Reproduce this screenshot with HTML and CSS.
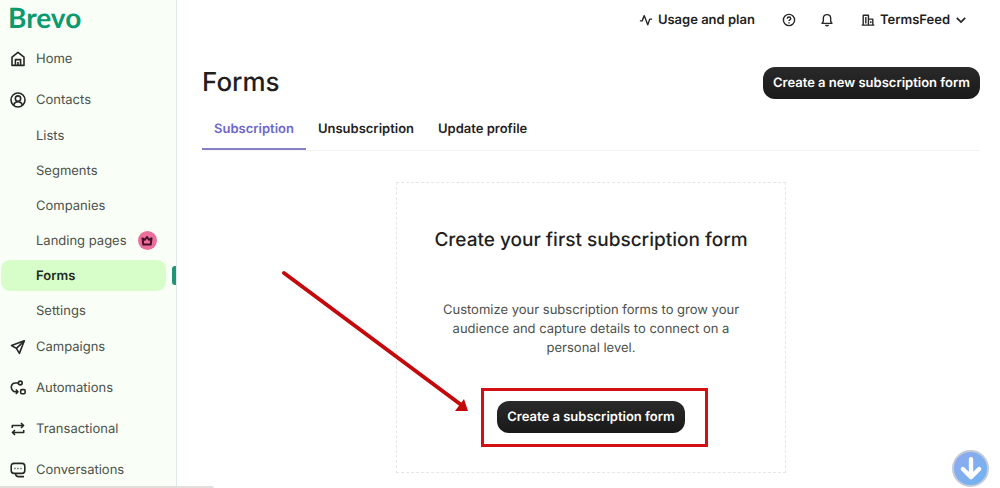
FILE: index.html
```
<!DOCTYPE html>
<html lang="en">
<head>
  <title>Forms - Brevo</title>
  <meta charset="UTF-8">
  <meta name="viewport" content="width=device-width, initial-scale=1">
  <link rel="stylesheet" href="styles.css">
</head>
<body>
  <div class="app">
    <aside class="sidebar">
      <a href="#" class="logo">Brevo</a>
      <nav>
        <a href="#" class="nav-item">
          <svg class="icon" viewBox="0 0 16 16"><path d="M2 6.200 8 1.400l6 4.800v8.200H2z"/><path d="M5.400 14.200V8.600h5.200v5.600M8 11v3"/></svg>
          Home
        </a>
        <a href="#" class="nav-item">
          <svg class="icon" viewBox="0 0 16 16"><circle cx="8" cy="8" r="7"/><circle cx="8" cy="6.600" r="2.700"/><path d="M3.600 13c.6-2.200 2.300-3.200 4.400-3.200s3.800 1 4.400 3.200"/></svg>
          Contacts
        </a>
        <div class="subnav">
          <a href="#">Lists</a>
          <a href="#">Segments</a>
          <a href="#">Companies</a>
          <a href="#">Landing pages
            <span class="premium">
              <svg viewBox="0 0 12 12"><path d="M1.500 3.400 3.800 4.800 6 2l2.200 2.800 2.300-1.400-.8 6.200H2.300z"/></svg>
            </span>
          </a>
          <a href="#" class="active">Forms</a>
          <a href="#">Settings</a>
        </div>
        <a href="#" class="nav-item">
          <svg class="icon" viewBox="0 0 16 16"><path d="M14.300 1.800 1.500 6.500l4.900 2.900 3 5z"/><path d="M14.300 1.800 6.400 9.400"/></svg>
          Campaigns
        </a>
        <a href="#" class="nav-item">
          <svg class="icon" viewBox="0 0 16 16"><circle cx="10.300" cy="3" r="1.900"/><rect x="10.700" y="9.600" width="4.400" height="4.200" rx="1"/><path d="M8.200 3H5.500C3 3 1.300 4.600 1.300 6.900S3 11.700 5.300 11.700h2.500M5.800 9.500 8 11.700l-2.200 2.200"/></svg>
          Automations
        </a>
        <a href="#" class="nav-item">
          <svg class="icon" viewBox="0 0 16 16"><path d="M2.300 7V4.500h11M11 2l2.600 2.500L11 7M13.700 9v2.500h-11M5 9l-2.600 2.500L5 14"/></svg>
          Transactional
        </a>
        <a href="#" class="nav-item">
          <svg class="icon" viewBox="0 0 16 16"><path d="M14 14.600H8.500c-1.800 0-2.800-.8-3.200-3.200M12 11.400H4c-1.800 0-2.800-1-2.800-2.800V4.200C1.200 2.400 2.200 1.400 4 1.400h8c1.800 0 2.800 1 2.800 2.800v4.400c0 1.800-1 2.800-2.800 2.800z"/><path d="M4.500 6.500h1M7.500 6.500h1M10.500 6.500h1"/></svg>
          Conversations
        </a>
      </nav>
    </aside>

    <main>
      <header class="topbar">
        <a href="#" class="usage">
          <svg class="icon" viewBox="0 0 16 16"><path d="M1 9h2.600L6 3l4 10.500L12.300 7H15"/></svg>
          Usage and plan
        </a>
        <button type="button" class="plain" aria-label="Help">
          <svg class="icon" viewBox="0 0 16 16"><circle cx="8" cy="8" r="6.400"/><path d="M6 6.600c0-1.200.8-2 2-2s2 .8 2 1.900c0 1.400-2 1.400-2 2.700M8 10.700v1.200"/></svg>
        </button>
        <button type="button" class="plain" aria-label="Notifications">
          <svg class="icon" viewBox="0 0 16 16"><path d="M2.300 11.800h11.400L12.200 9.500V6c0-2.500-1.700-4.200-4.200-4.200S3.800 3.500 3.800 6v3.500z"/><path d="M6.300 13.500c.3.800.9 1.200 1.700 1.200s1.400-.4 1.700-1.200"/></svg>
        </button>
        <button type="button" class="plain account">
          <svg class="icon" viewBox="0 0 16 16"><path d="M2.500 2.500h6v11.300h-6zM8.500 7h5v6.800h-5M.8 13.800h14.400"/><path d="M5.500 4.500v7.500M11.200 9.500v2"/></svg>
          TermsFeed
          <svg class="chevron" viewBox="0 0 10 10"><path d="M1.500 3.200 5 6.700l3.500-3.500"/></svg>
        </button>
      </header>

      <div class="page-head">
        <h1>Forms</h1>
        <button type="button" class="btn">Create a new subscription form</button>
      </div>

      <nav class="tabs">
        <a href="#" class="current">Subscription</a>
        <a href="#">Unsubscription</a>
        <a href="#">Update profile</a>
      </nav>

      <section class="card">
        <h2>Create your first subscription form</h2>
        <p>Customize your subscription forms to grow your audience and capture details to connect on a personal level.</p>
        <div class="highlight">
          <button type="button" class="btn">Create a subscription form</button>
          <svg class="arrow" viewBox="0 0 190 146">
            <path d="M4 4 180 135" stroke="#c4090c" stroke-width="4" stroke-linecap="round"/>
            <path d="M188 142 184 130 175 142z" fill="#c4090c"/>
          </svg>
        </div>
      </section>
    </main>
  </div>

  <button type="button" class="scroll-down" aria-label="Scroll down">
    <svg viewBox="0 0 24 24"><path d="M12 3v16M4.500 12 12 19.500 19.500 12"/></svg>
  </button>
  <div class="status"></div>
</body>
</html>
```

FILE: styles.css
```
:root {
  --green: #0b996e;
  --side: #f9fff6;
  --active: #d7fec8;
  --text: #1f1f1f;
  --muted: #4c504c;
  --purple: #6e67c8;
  --red: #d40f14;
}

* {
  box-sizing: border-box;
}

body {
  margin: 0;
  font-family: Inter, "Liberation Sans", sans-serif;
  font-size: 13px;
  text-rendering: geometricPrecision;
  color: var(--text);
  background: #fff;
}

a {
  color: inherit;
  text-decoration: none;
}

button {
  font: inherit;
  color: inherit;
  text-rendering: inherit;
  border: none;
  cursor: pointer;
}

.app {
  display: flex;
  height: 100vh;
  overflow: hidden;
}

.icon {
  width: 16px;
  height: 16px;
  flex: none;
  fill: none;
  stroke: #252825;
  stroke-width: 1.6;
  stroke-linejoin: round;
}

/* sidebar */
.sidebar {
  width: 177px;
  flex: none;
  background: var(--side);
  border-right: 1px solid #e0ebe6;
  color: var(--muted);
}

.logo {
  display: block;
  height: 38px;
  padding-left: 8px;
  font-family: Lato, sans-serif;
  font-size: 28px;
  font-weight: 700;
  line-height: 34px;
  color: var(--green);
}

.nav-item {
  display: flex;
  align-items: center;
  gap: 10px;
  height: 41px;
  padding-left: 10px;
}

.subnav {
  display: flex;
  flex-direction: column;
  gap: 4px;
  padding: 0 10px 0 1px;
}

.subnav a {
  position: relative;
  display: flex;
  align-items: center;
  gap: 11px;
  height: 31px;
  padding-left: 35px;
  border-radius: 9px;
}

.subnav .active {
  background: var(--active);
  color: #1d2b1d;
  font-weight: 600;
}

.subnav .active::after {
  content: "";
  position: absolute;
  right: -10px;
  top: 6px;
  width: 4px;
  height: 19px;
  border-radius: 3px 0 0 3px;
  background: #1c9676;
}

.premium {
  display: flex;
  align-items: center;
  justify-content: center;
  width: 19px;
  height: 19px;
  border-radius: 50%;
  background: #ea6f9b;
}

.premium svg {
  width: 12px;
  height: 12px;
  fill: none;
  stroke: #47112a;
  stroke-width: 2;
  stroke-linejoin: round;
}

/* content */
main {
  flex: 1;
  padding: 0 20px 0 25px;
}

.topbar {
  display: flex;
  align-items: center;
  justify-content: flex-end;
  gap: 24px;
  height: 40px;
  padding-right: 13px;
  font-weight: 600;
}

.topbar .icon {
  width: 14px;
  height: 14px;
}

.usage,
.plain {
  display: flex;
  align-items: center;
  gap: 5px;
  padding: 0;
  background: none;
}

.usage,
.account {
  margin: 0 3px;
}

.account {
  margin-right: 0;
}

.chevron {
  width: 12px;
  height: 12px;
  fill: none;
  stroke: #252825;
  stroke-width: 1.5;
}

.page-head {
  display: flex;
  align-items: center;
  justify-content: space-between;
  height: 85px;
}

h1 {
  margin: 0;
  font-size: 26px;
  font-weight: 500;
}

.btn {
  height: 32px;
  padding: 0 10px;
  border-radius: 12px;
  background: linear-gradient(#2a2a2a, #191919);
  color: #fff;
  font-weight: 600;
}

.tabs {
  display: flex;
  height: 30px;
  margin-top: -4px;
  border-bottom: 1px solid #f4f4f4;
  font-weight: 600;
}

.tabs a {
  padding: 0 12px;
}

.tabs .current {
  color: var(--purple);
  border-bottom: 2px solid #8680c4;
}

.card {
  max-width: 390px;
  margin: 31px auto 0;
  padding: 44px 40px 39px;
  border: 1px dashed #e6e6e6;
  text-align: center;
}

h2 {
  margin: 0 -10px;
  font-size: 19px;
  font-weight: 500;
  line-height: 26px;
}

p {
  margin: 48px 0 43px;
  line-height: 19px;
  color: var(--muted);
}

/* callout drawn over the button */
.highlight {
  position: relative;
  display: inline-flex;
}

.highlight::before {
  content: "";
  position: absolute;
  inset: -13px -23px -14px -16px;
  border: 3px solid var(--red);
  pointer-events: none;
}

.arrow {
  position: absolute;
  right: calc(100% + 27px);
  top: -132px;
  width: 190px;
  height: 146px;
  fill: none;
}

.scroll-down {
  position: fixed;
  right: 11px;
  bottom: 1px;
  width: 37px;
  height: 37px;
  padding: 0;
  border: 2px solid #c3cbd6;
  border-radius: 50%;
  background: linear-gradient(135deg, #8fa9ee, #6fb4f2);
}

.scroll-down svg {
  width: 26px;
  height: 26px;
  display: block;
  margin: auto;
  fill: none;
  stroke: #fff;
  stroke-width: 4;
  stroke-linecap: round;
  stroke-linejoin: round;
}

.status {
  position: fixed;
  left: 0;
  bottom: 0;
  width: 214px;
  height: 2px;
  background: #e2dedc;
  border-top-right-radius: 2px;
}
```
